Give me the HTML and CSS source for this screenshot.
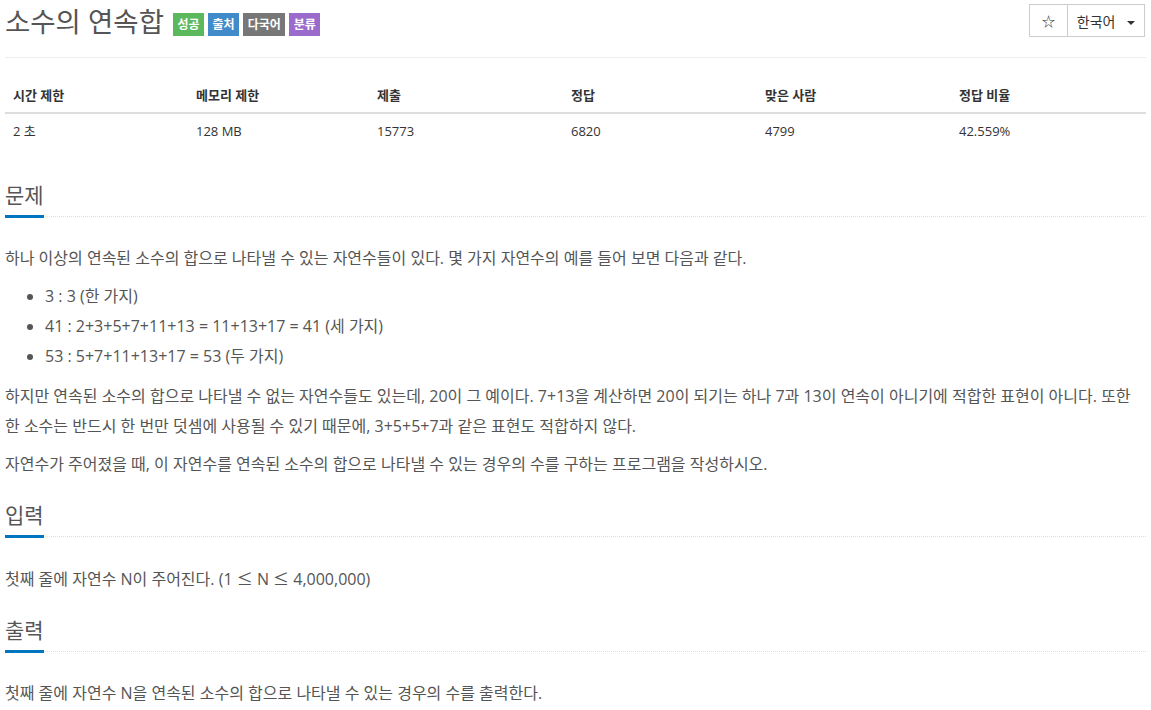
FILE: index.html
```html
<!DOCTYPE html>
<html lang="ko">
<head>
  <meta charset="UTF-8" />
  <title>소수의 연속합</title>
  <link rel="stylesheet" href="styles.css">
</head>
<body>
  <div class="page-header">
    <h1>
      <span class="title">소수의 연속합</span>
      <span class="label label-green">성공</span>
      <span class="label label-blue">출처</span>
      <span class="label label-gray">다국어</span>
      <span class="label label-purple">분류</span>
    </h1>
    <div class="btn-group">
      <button class="btn btn-star">☆</button>
      <button class="btn btn-lang">한국어 <span class="caret"></span></button>
    </div>
  </div>

  <table class="info">
    <thead>
      <tr>
        <th class="c1">시간 제한</th>
        <th class="c2">메모리 제한</th>
        <th class="c3">제출</th>
        <th class="c4">정답</th>
        <th class="c5">맞은 사람</th>
        <th>정답 비율</th>
      </tr>
    </thead>
    <tbody>
      <tr>
        <td>2 초</td>
        <td>128 MB</td>
        <td>15773</td>
        <td>6820</td>
        <td>4799</td>
        <td>42.559%</td>
      </tr>
    </tbody>
  </table>

  <section class="problem">
    <h2 class="headline"><span>문제</span></h2>
    <div class="text">
      <p>하나 이상의 연속된 소수의 합으로 나타낼 수 있는 자연수들이 있다. 몇 가지 자연수의 예를 들어 보면 다음과 같다.</p>
      <ul>
        <li>3 : 3 (한 가지)</li>
        <li>41 : 2+3+5+7+11+13 = 11+13+17 = 41 (세 가지)</li>
        <li>53 : 5+7+11+13+17 = 53 (두 가지)</li>
      </ul>
      <p>하지만 연속된 소수의 합으로 나타낼 수 없는 자연수들도 있는데, 20이 그 예이다. 7+13을 계산하면 20이 되기는 하나 7과 13이 연속이 아니기에 적합한 표현이 아니다. 또한 한 소수는 반드시 한 번만 덧셈에 사용될 수 있기 때문에, 3+5+5+7과 같은 표현도 적합하지 않다.</p>
      <p>자연수가 주어졌을 때, 이 자연수를 연속된 소수의 합으로 나타낼 수 있는 경우의 수를 구하는 프로그램을 작성하시오.</p>
    </div>
  </section>

  <section class="problem">
    <h2 class="headline"><span>입력</span></h2>
    <div class="text">
      <p>첫째 줄에 자연수 N이 주어진다. (1 <span class="sym">≤</span> N <span class="sym">≤</span> 4,000,000)</p>
    </div>
  </section>

  <section class="problem">
    <h2 class="headline"><span>출력</span></h2>
    <div class="text">
      <p>첫째 줄에 자연수 N을 연속된 소수의 합으로 나타낼 수 있는 경우의 수를 출력한다.</p>
    </div>
  </section>
</body>
</html>
```

FILE: styles.css
```css
* { margin: 0; padding: 0; box-sizing: border-box; }

body {
  font-family: 'Open Sans', 'Noto Sans CJK KR', sans-serif;
  font-size: 13px;
  color: #333;
  background: #fff;
  padding: 0 5px;
  overflow: hidden;
}

.page-header {
  display: flex;
  justify-content: space-between;
  align-items: flex-start;
  border-bottom: 1px solid #eee;
  padding-top: 4px;
  height: 58px;
}

h1 {
  display: flex;
  align-items: center;
  font-weight: normal;
}

.title {
  font-size: 27.5px;
  color: #555;
  line-height: 36px;
  margin-right: 9px;
}

.label {
  display: inline-block;
  font-size: 12px;
  font-weight: bold;
  color: #fff;
  height: 23px;
  line-height: 23px;
  padding: 0 4.5px;
  margin-right: 4px;
  margin-top: 4px;
}

.label-green { background: #5cb85c; }
.label-blue { background: #428bca; }
.label-gray { background: #777; }
.label-purple { background: #9b6bcc; }

.btn-group {
  display: flex;
  margin-right: 1px;
}

.btn {
  font-family: inherit;
  font-size: 14px;
  color: #333;
  background: #fff;
  border: 1px solid #ccc;
  height: 33px;
  padding: 0;
  cursor: pointer;
}

.btn-star { width: 39px; font-size: 13px; }
.btn-lang { width: 78px; }

.btn + .btn { margin-left: -1px; }

.caret {
  display: inline-block;
  width: 0;
  height: 0;
  margin-left: 8px;
  vertical-align: middle;
  border-top: 4px solid #333;
  border-left: 4px solid transparent;
  border-right: 4px solid transparent;
}

.info {
  width: 100%;
  border-collapse: collapse;
  margin-top: 20px;
  margin-bottom: 31px;
}

.info th, .info td {
  text-align: left;
  padding: 8px;
  line-height: 18px;
}

.info th {
  font-weight: bold;
  border-bottom: 2px solid #ddd;
}

.c1 { width: 183px; }
.c2 { width: 181px; }
.c3 { width: 194px; }
.c4 { width: 194px; }
.c5 { width: 194px; }

.headline {
  font-size: 21px;
  font-weight: normal;
  color: #555;
  border-bottom: 1px dotted #ddd;
  line-height: 32px;
  margin-bottom: 26px;
}

.headline span {
  display: inline-block;
  border-bottom: 3px solid #0076c0;
  margin-bottom: -2px;
  padding-bottom: 4px;
}

.text {
  font-size: 16px;
  color: #555;
  line-height: 30px;
}

.text p { margin-bottom: 8px; }

.text ul {
  padding-left: 40px;
  margin-bottom: 10px;
}

.sym { font-family: 'Noto Sans CJK KR', sans-serif; }

.problem { margin-bottom: 20px; }
```
